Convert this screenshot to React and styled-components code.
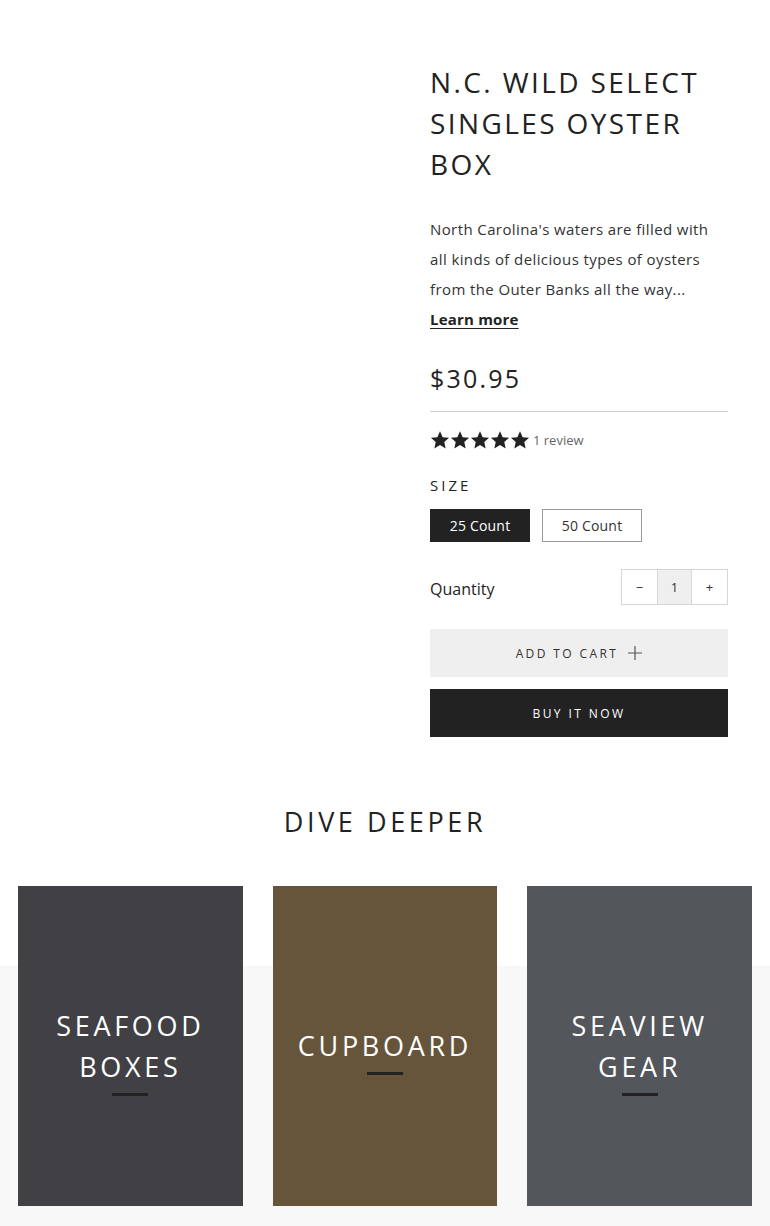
import React from 'react'
import styled, { createGlobalStyle } from 'styled-components'

const GlobalStyle = createGlobalStyle`
  body {
    margin: 0;
    background: #fff;
    font-family: 'Open Sans', 'Noto Sans', sans-serif;
    color: #222;
  }
  * { box-sizing: border-box; }
`

const ProductRoot = styled.section`
  display: grid;
  grid-template-columns: 1fr 298px;
  column-gap: 30px;
  padding: 62px 42px 0 0;
`

const Gallery = styled.div``

const Info = styled.div`
  display: flex;
  flex-direction: column;
`

const Title = styled.h1`
  margin: 0;
  font-size: 28px;
  line-height: 41px;
  font-weight: 400;
  letter-spacing: 2.4px;
  color: #222;
`

const Description = styled.p`
  margin: 29px 0 0;
  font-size: 15px;
  line-height: 30px;
  color: #333;
  letter-spacing: 0.4px;
`

const LearnMore = styled.a`
  font-size: 15px;
  line-height: 30px;
  font-weight: 700;
  letter-spacing: 0.2px;
  color: #222;
  text-decoration: underline;
  text-underline-offset: 3px;
`

const Price = styled.div`
  margin-top: 26px;
  font-size: 25px;
  line-height: 36px;
  letter-spacing: 2.2px;
  color: #222;
`

const Divider = styled.hr`
  margin: 15px 0 0;
  border: none;
  border-top: 1px solid #cfcfcf;
`

const Reviews = styled.div`
  margin-top: 18px;
  display: flex;
  align-items: center;
  height: 20px;
  font-size: 13px;
  color: #666;
`

const Stars = styled.div`
  display: flex;
  margin-right: 3px;
`

const OptionLabel = styled.div`
  margin-top: 25px;
  font-size: 15px;
  line-height: 20px;
  letter-spacing: 3px;
  color: #222;
`

const Options = styled.div`
  margin-top: 14px;
  display: flex;
  gap: 12px;
`

const Swatch = styled.button`
  width: 100px;
  height: 33px;
  font-family: inherit;
  font-size: 14px;
  letter-spacing: 0.2px;
  border: 1px solid ${p => (p.$active ? '#222' : '#999')};
  background: ${p => (p.$active ? '#222' : '#fff')};
  color: ${p => (p.$active ? '#fff' : '#333')};
  padding: 0;
`

const QtyRow = styled.div`
  margin-top: 27px;
  display: flex;
  justify-content: space-between;
  align-items: center;
`

const QtyLabel = styled.span`
  font-size: 16px;
  color: #222;
  padding-top: 4px;
`

const Stepper = styled.div`
  display: flex;
  border: 1px solid #d6d6d6;
  height: 36px;
`

const StepCell = styled.div`
  width: 35px;
  display: flex;
  align-items: center;
  justify-content: center;
  font-size: 13px;
  color: #333;
  background: ${p => (p.$value ? '#efefef' : '#fff')};
  border-left: ${p => (p.$value ? '1px solid #d6d6d6' : 'none')};
  border-right: ${p => (p.$value ? '1px solid #d6d6d6' : 'none')};
`

const CartButton = styled.button`
  margin-top: 24px;
  height: 48px;
  border: none;
  display: flex;
  align-items: center;
  justify-content: center;
  gap: 10px;
  font-family: inherit;
  font-size: 12px;
  letter-spacing: 2.4px;
  background: ${p => (p.$dark ? '#222' : '#efefef')};
  color: ${p => (p.$dark ? '#fff' : '#333')};
  padding: 0;
`

const BuyButton = styled(CartButton)`
  margin-top: 12px;
`

const Collections = styled.section`
  margin-top: 65px;
  padding: 0 18px 20px;
  background: linear-gradient(#fff 0, #fff 164px, #f8f8f8 164px);
`

const SectionTitle = styled.h2`
  margin: 0;
  text-align: center;
  font-size: 27px;
  line-height: 40px;
  font-weight: 400;
  letter-spacing: 3.6px;
  color: #222;
`

const CardGrid = styled.div`
  margin-top: 44px;
  display: grid;
  grid-template-columns: repeat(3, 1fr);
  gap: 30px;
`

const Card = styled.a`
  height: 320px;
  background: ${p => p.$bg};
  display: flex;
  flex-direction: column;
  align-items: center;
  justify-content: center;
  padding-top: 8px;
  text-decoration: none;
`

const CardTitle = styled.div`
  color: #fff;
  text-align: center;
  font-size: 27px;
  line-height: 41px;
  letter-spacing: 3.7px;
  padding: 0 20px;
`

const CardBar = styled.div`
  margin-top: 6px;
  width: 36px;
  height: 3px;
  background: #222;
`

function Star() {
  return (
    <svg width="20" height="20" viewBox="0 0 24 24">
      <path
        fill="#222"
        d="M12 1.6l3.2 7.1 7.7.7-5.8 5.1 1.7 7.6L12 18.1l-6.8 4 1.7-7.6-5.8-5.1 7.7-.7z"
      />
    </svg>
  )
}

function PlusIcon() {
  return (
    <svg width="14" height="14" viewBox="0 0 14 14">
      <path d="M7 0v14M0 7h14" stroke="#555" strokeWidth="1.2" />
    </svg>
  )
}

const collections = [
  { title: ['SEAFOOD', 'BOXES'], bg: '#414145' },
  { title: ['CUPBOARD'], bg: '#66553a' },
  { title: ['SEAVIEW', 'GEAR'], bg: '#53565b' },
]

export default function App() {
  return (
    <>
      <GlobalStyle />
      <ProductRoot>
        <Gallery />
        <Info>
          <Title>N.C. WILD SELECT SINGLES OYSTER BOX</Title>
          <Description>
            North Carolina's waters are filled with all kinds of delicious types of
            oysters from the Outer Banks all the way...
            <br />
            <LearnMore href="#">Learn more</LearnMore>
          </Description>
          <Price>$30.95</Price>
          <Divider />
          <Reviews>
            <Stars>
              {[0, 1, 2, 3, 4].map(i => (
                <Star key={i} />
              ))}
            </Stars>
            1 review
          </Reviews>
          <OptionLabel>SIZE</OptionLabel>
          <Options>
            <Swatch $active>25 Count</Swatch>
            <Swatch>50 Count</Swatch>
          </Options>
          <QtyRow>
            <QtyLabel>Quantity</QtyLabel>
            <Stepper>
              <StepCell>−</StepCell>
              <StepCell $value>1</StepCell>
              <StepCell>+</StepCell>
            </Stepper>
          </QtyRow>
          <CartButton>
            ADD TO CART <PlusIcon />
          </CartButton>
          <BuyButton $dark>BUY IT NOW</BuyButton>
        </Info>
      </ProductRoot>
      <Collections>
        <SectionTitle>DIVE DEEPER</SectionTitle>
        <CardGrid>
          {collections.map(c => (
            <Card key={c.bg} $bg={c.bg} href="#">
              <CardTitle>
                {c.title.map(line => (
                  <div key={line}>{line}</div>
                ))}
              </CardTitle>
              <CardBar />
            </Card>
          ))}
        </CardGrid>
      </Collections>
    </>
  )
}
